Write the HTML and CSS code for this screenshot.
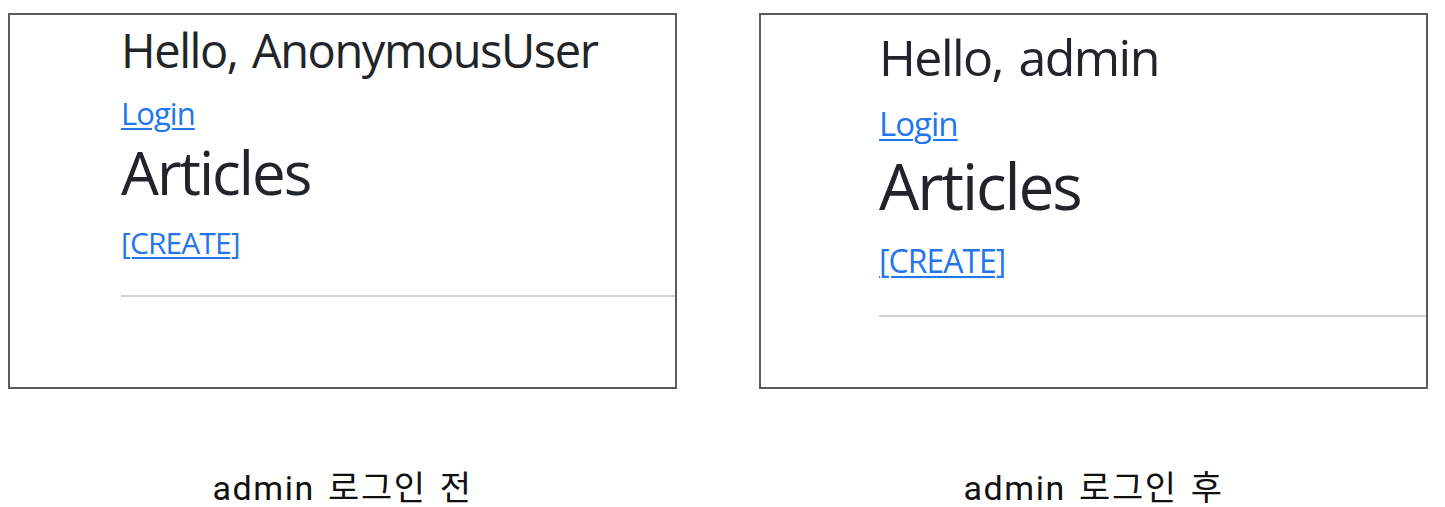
FILE: index.html
```html
<!DOCTYPE html>
<html lang="ko">
<head>
<meta charset="utf-8">
<title>admin 로그인 전 / 후</title>
<link rel="stylesheet" href="styles.css">
</head>
<body>
  <div class="compare">
    <figure class="shot">
      <div class="frame">
        <div class="page">
          <h2 class="hello">Hello, AnonymousUser</h2>
          <a class="login" href="#">Login</a>
          <h1 class="title">Articles</h1>
          <a class="create" href="#">[CREATE]</a>
          <hr class="rule">
        </div>
      </div>
      <figcaption class="caption">admin 로그인 전</figcaption>
    </figure>
    <figure class="shot">
      <div class="frame">
        <div class="page page-zoom">
          <h2 class="hello">Hello, admin</h2>
          <a class="login" href="#">Login</a>
          <h1 class="title">Articles</h1>
          <a class="create" href="#">[CREATE]</a>
          <hr class="rule">
        </div>
      </div>
      <figcaption class="caption">admin 로그인 후</figcaption>
    </figure>
  </div>
</body>
</html>
```

FILE: styles.css
```css
* { box-sizing: border-box; }

html, body {
  margin: 0;
  padding: 0;
  background: #ffffff;
}

.compare {
  display: flex;
  gap: 82px;
  padding: 13px 0 0 8px;
}

.shot {
  margin: 0;
  width: 669px;
  display: flex;
  flex-direction: column;
}

.frame {
  height: 376px;
  border: 2px solid #5c5c5c;
  overflow: hidden;
}

.page {
  --s: 1;
  --rule-gap: 37px;
  font-family: "Open Sans", "Noto Sans", sans-serif;
  color: #212529;
  padding-left: 111px;
  display: flex;
  flex-direction: column;
  align-items: flex-start;
}

.page-zoom {
  --s: 1.065;
  --rule-gap: 38px;
  padding-top: 4px;
  padding-left: 118px;
}

.hello {
  margin: calc(12px * var(--s)) 0 0;
  font-size: calc(47px * var(--s));
  font-weight: 400;
  line-height: 1;
  letter-spacing: -0.031em;
  word-spacing: 0.08em;
}

.login {
  margin-top: calc(23.6px * var(--s));
  font-size: calc(31px * var(--s));
  line-height: 1;
  letter-spacing: -0.03em;
  color: #2376ee;
  text-decoration: underline;
  text-underline-offset: 0.1em;
  text-decoration-thickness: 0.065em;
}

.title {
  margin: calc(13px * var(--s)) 0 0;
  font-size: calc(60px * var(--s));
  font-weight: 400;
  line-height: 1;
  letter-spacing: -0.033em;
}

.create {
  margin-top: calc(26px * var(--s));
  font-size: calc(30px * var(--s));
  line-height: 1;
  letter-spacing: -0.03em;
  color: #2376ee;
  text-decoration: underline;
  text-underline-offset: 0.1em;
  text-decoration-thickness: 0.065em;
}

.rule {
  align-self: stretch;
  margin: var(--rule-gap) 0 0;
  border: 0;
  border-top: 2px solid #d2d3d4;
  height: 0;
}

.caption {
  margin-top: 82px;
  text-align: center;
  font-family: Roboto, "Noto Sans CJK KR", sans-serif;
  font-size: 34px;
  line-height: 1;
  letter-spacing: 1.6px;
  word-spacing: 3px;
  color: #111111;
}
```
